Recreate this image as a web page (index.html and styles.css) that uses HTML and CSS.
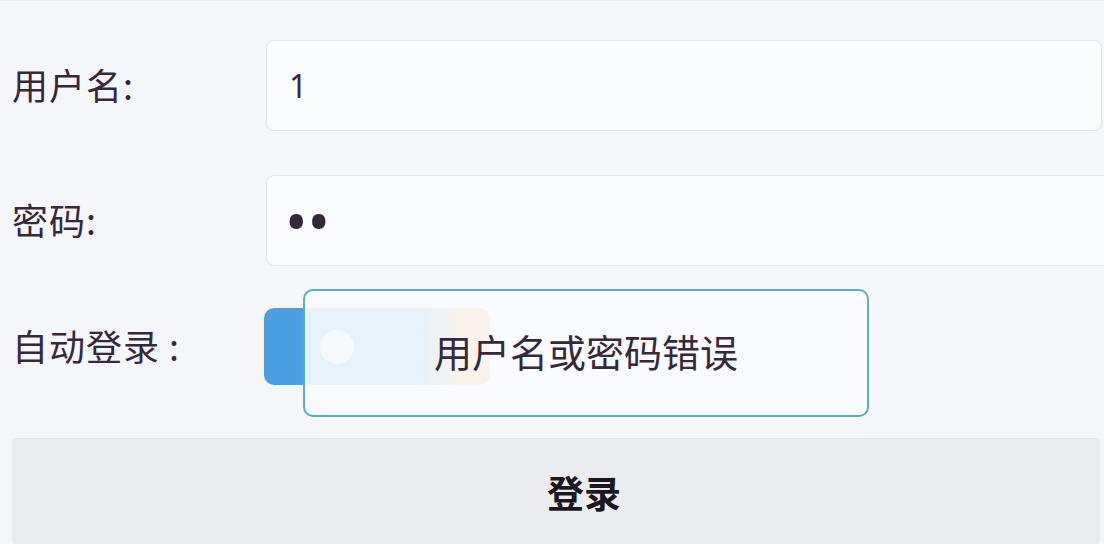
FILE: index.html
```html
<!DOCTYPE html>
<html lang="zh-CN">
<head>
  <meta charset="UTF-8" />
  <meta name="viewport" content="width=device-width, initial-scale=1.0"/>
  <title>登录</title>
  <link rel="stylesheet" href="styles.css">
</head>
<body>

<main class="login">
  <form class="login-form">
    <div class="form-row">
      <label class="form-label" for="username">用户名:</label>
      <input class="form-input" id="username" type="text" value="1">
    </div>

    <div class="form-row">
      <label class="form-label" for="password">密码:</label>
      <input class="form-input" id="password" type="password" value="12">
    </div>

    <div class="form-row switch-row">
      <span class="form-label">自动登录 :</span>
      <div class="switch">
        <span class="switch-knob"></span>
      </div>
    </div>

    <button class="login-btn" type="button">登录</button>
  </form>

  <div class="toast">用户名或密码错误</div>
</main>

</body>
</html>
```

FILE: styles.css
```css
body {
  margin: 0;
  background-color: #f5f6f9;
  font-family: "Noto Sans CJK SC", "Noto Sans", sans-serif;
  color: #35283a;
}

.login {
  position: relative;
  height: 544px;
  overflow: hidden;
  border-top: 1px solid #eaecf0;
  box-sizing: border-box;
}

.login-form {
  padding: 39px 2px 0 12px;
}

.form-row {
  display: flex;
  align-items: center;
  height: 91px;
  margin-bottom: 44px;
}

.form-label {
  width: 254px;
  flex-shrink: 0;
  font-size: 36px;
  letter-spacing: 1px;
  line-height: 1;
  margin-top: -4px;
}

.form-input {
  flex: 1;
  height: 91px;
  box-sizing: border-box;
  border: 1px solid #e5e7ec;
  border-radius: 8px;
  background-color: #fbfcfe;
  padding: 0 22px;
  font-family: "Noto Sans", sans-serif;
  font-size: 32px;
  color: #35283a;
  outline: none;
}

#password {
  font-size: 60px;
  letter-spacing: 0;
  padding-left: 18px;
}

.switch-row {
  height: 77px;
  margin-top: -2px;
  margin-bottom: 53px;
}

.switch {
  width: 226px;
  height: 77px;
  margin-left: -2px;
  border-radius: 10px;
  background: linear-gradient(90deg, #4aa0e2 0%, #4aa0e2 70%, #f4b04a 88%, #f4b04a 100%);
  display: flex;
  align-items: center;
  padding-left: 56px;
  box-sizing: border-box;
}

.switch-knob {
  width: 34px;
  height: 34px;
  border-radius: 50%;
  background: #ffffff;
  opacity: 0.7;
}

.login-btn {
  display: block;
  width: calc(100% - 2px);
  height: 106px;
  padding: 0 0 0 56px;
  border: none;
  border-top: 1px solid #e4e6ea;
  border-radius: 4px;
  background-color: #ebecf0;
  font-family: "Noto Sans CJK SC", sans-serif;
  font-size: 37px;
  font-weight: bold;
  color: #1c1620;
  cursor: pointer;
}

.toast {
  position: absolute;
  left: 303px;
  top: 288px;
  width: 566px;
  height: 128px;
  padding-bottom: 6px;
  box-sizing: border-box;
  border: 2px solid #55b2b8;
  border-radius: 10px;
  background: rgba(250, 251, 253, 0.9);
  display: flex;
  align-items: center;
  justify-content: center;
  font-size: 38px;
  color: #35283a;
}
```
